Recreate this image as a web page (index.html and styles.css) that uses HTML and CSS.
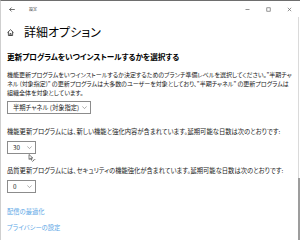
FILE: index.html
```html
<!DOCTYPE html>
<html lang="ja">
  <head>
    <meta charset="UTF-8" />
    <title>設定</title>
    <link rel="stylesheet" href="styles.css">
  </head>
  <body>
    <div class="window">
      <div class="titlebar">
        <svg class="back" width="6" height="5" viewBox="0 0 6 5">
          <path d="M5.8 2.5H0.6M2.6 0.5L0.6 2.5L2.6 4.5" fill="none" stroke="#333" stroke-width="0.7" />
        </svg>
        <span class="app-name">設定</span>
        <div class="controls">
          <svg width="5" height="5" viewBox="0 0 5 5"><path d="M0.5 2.5H4.5" stroke="#666" stroke-width="0.7" /></svg>
          <svg width="5" height="5" viewBox="0 0 5 5"><rect x="0.8" y="0.8" width="3.4" height="3.4" fill="none" stroke="#666" stroke-width="0.7" /></svg>
          <svg width="5" height="5" viewBox="0 0 5 5"><path d="M0.8 0.8L4.2 4.2M4.2 0.8L0.8 4.2" stroke="#666" stroke-width="0.7" /></svg>
        </div>
      </div>

      <div class="heading">
        <svg class="home" width="7" height="7" viewBox="0 0 7 7">
          <path d="M0.5 3.6L3.5 0.7L6.5 3.6M1.4 2.8V6.5H5.6V2.8M2.9 6.5V4.6H4.1V6.5" fill="none" stroke="#111" stroke-width="0.7" />
        </svg>
        <h1>詳細オプション</h1>
      </div>

      <div class="content">
        <h2>更新プログラムをいつインストールするかを選択する</h2>
        <p class="desc">
          機能更新プログラムをいつインストールするか決定するためのブランチ準備レベルを選択してください。"半期チャ<br>
          ネル (対象指定)" の更新プログラムは大多数のユーザーを対象としており、"半期チャネル" の更新プログラムは<br>
          組織全体を対象としています。
        </p>
        <div class="select wide">
          <span>半期チャネル (対象指定)</span>
          <svg width="5" height="3" viewBox="0 0 5 3"><path d="M0.3 0.4L2.5 2.6L4.7 0.4" fill="none" stroke="#777" stroke-width="0.6" /></svg>
        </div>

        <p class="label first">機能更新プログラムには、新しい機能と強化内容が含まれています。延期可能な日数は次のとおりです:</p>
        <div class="select narrow">
          <span>30</span>
          <svg width="5" height="3" viewBox="0 0 5 3"><path d="M0.3 0.4L2.5 2.6L4.7 0.4" fill="none" stroke="#777" stroke-width="0.6" /></svg>
          <svg class="cursor" width="8" height="8" viewBox="0 0 8 8">
            <path d="M1 0.5V5.5L2.3 4.3L3.2 6.2L3.9 5.9L3 4H4.8Z" fill="#fff" stroke="#000" stroke-width="0.5" />
            <circle cx="5.6" cy="6.2" r="0.5" fill="#222" />
            <circle cx="6.8" cy="5.4" r="0.5" fill="#555" />
            <circle cx="4.6" cy="7.2" r="0.5" fill="#777" />
          </svg>
        </div>

        <p class="label">品質更新プログラムには、セキュリティの機能強化が含まれています。延期可能な日数は次のとおりです:</p>
        <div class="select narrow">
          <span>0</span>
          <svg width="5" height="3" viewBox="0 0 5 3"><path d="M0.3 0.4L2.5 2.6L4.7 0.4" fill="none" stroke="#777" stroke-width="0.6" /></svg>
        </div>

        <a class="link first-link" href="#">配信の最適化</a>
        <a class="link" href="#">プライバシーの設定</a>
      </div>

      <div class="scroll-track"></div>
      <div class="scroll-thumb"></div>
    </div>
  </body>
</html>
```

FILE: styles.css
```css
* {
  margin: 0;
  padding: 0;
  box-sizing: border-box;
}

body {
  font-family: "Noto Sans CJK JP", "Noto Sans", sans-serif;
  font-feature-settings: "palt";
  background-color: #fff;
  color: #1a1a1a;
  width: 300px;
  height: 240px;
  overflow: hidden;
}

.window {
  position: relative;
  height: 240px;
  border-top: 1px solid #6e6e6e;
  border-left: 1px solid #cfcfcf;
}

/* タイトルバー */
.titlebar {
  height: 17px;
  display: flex;
  align-items: center;
  padding-left: 8px;
  padding-right: 8px;
}

.back {
  display: block;
}

.app-name {
  font-size: 4px;
  line-height: 5px;
  margin-left: 14px;
  color: #333;
}

.controls {
  margin-left: auto;
  display: flex;
  gap: 16px;
}

.controls svg {
  display: block;
}

/* 見出し */
.heading {
  height: 28px;
  display: flex;
  align-items: center;
  padding-left: 6px;
}

.home {
  display: block;
}

h1 {
  font-size: 12px;
  line-height: 14px;
  font-weight: 400;
  margin-left: 10px;
  color: #000;
}

.content {
  padding-left: 6px;
}

h2 {
  font-size: 7.6px;
  line-height: 12px;
  font-weight: 700;
  margin-top: 5px;
  color: #000;
  white-space: nowrap;
}

.desc,
.label {
  font-size: 6.3px;
  line-height: 9px;
  white-space: nowrap;
}

.desc {
  font-size: 6px;
  margin-top: 7px;
}

.label {
  margin-top: 12px;
}

.label.first {
  margin-top: 13px;
}

/* ドロップダウン */
.select {
  position: relative;
  height: 13px;
  margin-top: 5px;
  border: 1px solid #8c8c8c;
  display: flex;
  align-items: center;
  justify-content: space-between;
  padding: 0 3px 0 5px;
  font-size: 6.3px;
}

.desc + .select {
  margin-top: 4px;
}

.select svg {
  display: block;
}

.wide {
  width: 84px;
}

.narrow {
  width: 29px;
}

.cursor {
  position: absolute;
  left: 20px;
  top: 12px;
}

/* リンク */
.link {
  display: block;
  width: max-content;
  font-size: 6.3px;
  line-height: 10px;
  color: #5ba7e6;
  text-decoration: none;
  margin-top: 6px;
}

.first-link {
  margin-top: 14px;
}

.scroll-track {
  position: absolute;
  right: 1px;
  top: 16px;
  bottom: 0;
  width: 1px;
  background-color: #dadada;
}

.scroll-thumb {
  position: absolute;
  right: 0;
  top: 177px;
  bottom: 0;
  width: 2px;
  background-color: #9d9d9d;
}
```
